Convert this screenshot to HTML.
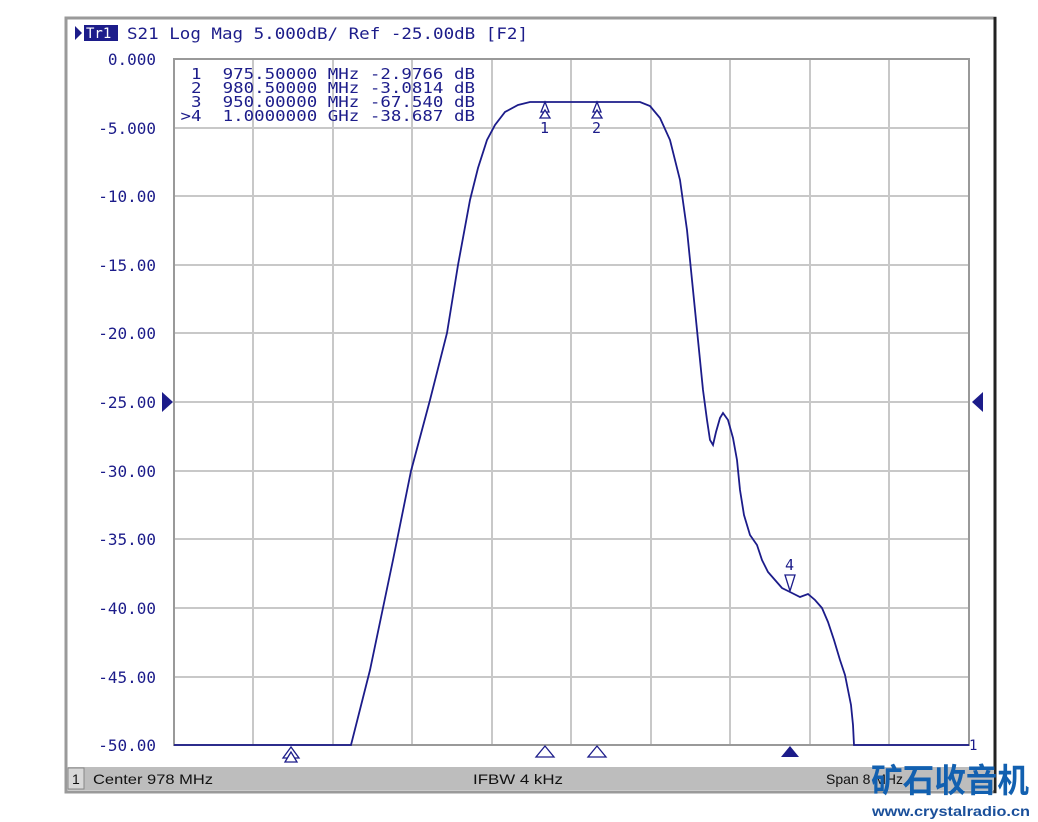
<!DOCTYPE html>
<html><head><meta charset="utf-8"><style>
html,body{margin:0;padding:0;background:#fff;width:1038px;height:822px;overflow:hidden}
svg{display:block}
text{font-family:"DejaVu Sans Mono","Liberation Mono",monospace;fill:#1c1c8a}
</style></head><body>
<svg width="1038" height="822" viewBox="0 0 1038 822">
<rect x="0" y="0" width="1038" height="822" fill="#fff"/>
<rect x="66" y="18" width="929" height="774" fill="#fff" stroke="#9a9a9a" stroke-width="3"/>
<line x1="995" y1="17" x2="995" y2="793" stroke="#222" stroke-width="3"/>
<g stroke="#c8c8c8" stroke-width="2">
<line x1="253" y1="59" x2="253" y2="745"/><line x1="333" y1="59" x2="333" y2="745"/>
<line x1="412" y1="59" x2="412" y2="745"/><line x1="492" y1="59" x2="492" y2="745"/>
<line x1="571" y1="59" x2="571" y2="745"/><line x1="651" y1="59" x2="651" y2="745"/>
<line x1="730" y1="59" x2="730" y2="745"/><line x1="810" y1="59" x2="810" y2="745"/>
<line x1="889" y1="59" x2="889" y2="745"/>
<line x1="174" y1="128" x2="969" y2="128"/><line x1="174" y1="196" x2="969" y2="196"/>
<line x1="174" y1="265" x2="969" y2="265"/><line x1="174" y1="333" x2="969" y2="333"/>
<line x1="174" y1="402" x2="969" y2="402"/><line x1="174" y1="471" x2="969" y2="471"/>
<line x1="174" y1="539" x2="969" y2="539"/><line x1="174" y1="608" x2="969" y2="608"/>
<line x1="174" y1="677" x2="969" y2="677"/>
</g>
<rect x="174" y="59" width="795" height="686" fill="none" stroke="#999" stroke-width="2"/>
<polygon points="75,26 75,40 82,33" fill="#1c1c8a"/>
<rect x="84" y="25" width="34" height="16" fill="#1c1c8a"/>
<text x="86" y="38" font-size="14" style="fill:#fff">Tr1</text>
<text x="127" y="39" font-size="16" textLength="401" lengthAdjust="spacingAndGlyphs">S21 Log Mag 5.000dB/ Ref -25.00dB [F2]</text>
<g font-size="16" text-anchor="end">
<text x="156" y="65">0.000</text><text x="156" y="134">-5.000</text>
<text x="156" y="202">-10.00</text><text x="156" y="271">-15.00</text>
<text x="156" y="339">-20.00</text><text x="156" y="408">-25.00</text>
<text x="156" y="477">-30.00</text><text x="156" y="545">-35.00</text>
<text x="156" y="614">-40.00</text><text x="156" y="683">-45.00</text>
<text x="156" y="751">-50.00</text>
</g>
<polygon points="162,392 162,412 173,402" fill="#1c1c8a"/>
<polygon points="983,392 983,412 972,402" fill="#1c1c8a"/>
<g font-size="15">
<text x="170" y="79" xml:space="preserve" textLength="305" lengthAdjust="spacingAndGlyphs">  1  975.50000 MHz -2.9766 dB</text>
<text x="170" y="93" xml:space="preserve" textLength="305" lengthAdjust="spacingAndGlyphs">  2  980.50000 MHz -3.0814 dB</text>
<text x="170" y="107" xml:space="preserve" textLength="305" lengthAdjust="spacingAndGlyphs">  3  950.00000 MHz -67.540 dB</text>
<text x="170" y="121" xml:space="preserve" textLength="305" lengthAdjust="spacingAndGlyphs"> &gt;4  1.0000000 GHz -38.687 dB</text>
</g>
<polyline fill="none" stroke="#1c1c8a" stroke-width="1.8" points="174,745 351,745 370,670 393,560 411,471 430,400 447,333 458,265 470,200 478,168 487,140 495,125 505,112 518,105 530,102 545,102 640,102 650,106 660,118 670,140 680,180 687,230 692,280 698,340 703,390 707,420 710,440 713,445 716,432 720,418 723,413 728,420 733,438 737,460 740,490 744,515 750,535 757,545 762,560 768,572 775,580 782,588 790,592 800,597 808,594 815,600 822,608 828,622 834,640 840,660 845,675 848,690 851,705 853,725 854,745 969,745"/>
<text x="969" y="750" font-size="14">1</text>
<g fill="#fff" stroke="#1c1c8a" stroke-width="1.3">
<polygon points="545,102 541,112 549,112"/><polygon points="545,110 540,118 550,118"/>
<polygon points="597,102 593,112 601,112"/><polygon points="597,110 592,118 602,118"/>
<polygon points="790,591 785,575 795,575"/>
</g>
<text x="540" y="133" font-size="15">1</text>
<text x="592" y="133" font-size="15">2</text>
<text x="785" y="570" font-size="15">4</text>
<g fill="#fff" stroke="#1c1c8a" stroke-width="1.3">
<polygon points="291,747 283,758 299,758"/><polygon points="291,752 285,762 297,762"/>
<polygon points="545,746 536,757 554,757"/><polygon points="597,746 588,757 606,757"/>
</g>
<polygon points="790,746 781,757 799,757" fill="#1c1c8a"/>
<rect x="67" y="767" width="927" height="23" fill="#bdbdbd"/>
<rect x="68" y="768" width="16" height="21" fill="#d8d8d8" stroke="#888" stroke-width="1"/>
<text x="72" y="784" font-size="14" style="font-family:'Liberation Sans',sans-serif;fill:#111">1</text>
<text x="93" y="784" font-size="14" textLength="120" lengthAdjust="spacingAndGlyphs" style="font-family:'Liberation Sans',sans-serif;fill:#111">Center 978 MHz</text>
<text x="473" y="784" font-size="14" textLength="90" lengthAdjust="spacingAndGlyphs" style="font-family:'Liberation Sans',sans-serif;fill:#111">IFBW 4 kHz</text>
<text x="826" y="784" font-size="14" style="font-family:'Liberation Sans',sans-serif;fill:#111">Span 8 MHz</text>
<text x="871" y="792" font-size="33" font-weight="bold" textLength="158" lengthAdjust="spacingAndGlyphs" style="font-family:'WenQuanYi Zen Hei','Noto Sans CJK SC',sans-serif;fill:#1260b0">矿石收音机</text>
<text x="872" y="816" font-size="14" font-weight="bold" textLength="158" lengthAdjust="spacingAndGlyphs" style="font-family:'Liberation Sans',sans-serif;fill:#1a4f9a">www.crystalradio.cn</text>
</svg>
</body></html>
